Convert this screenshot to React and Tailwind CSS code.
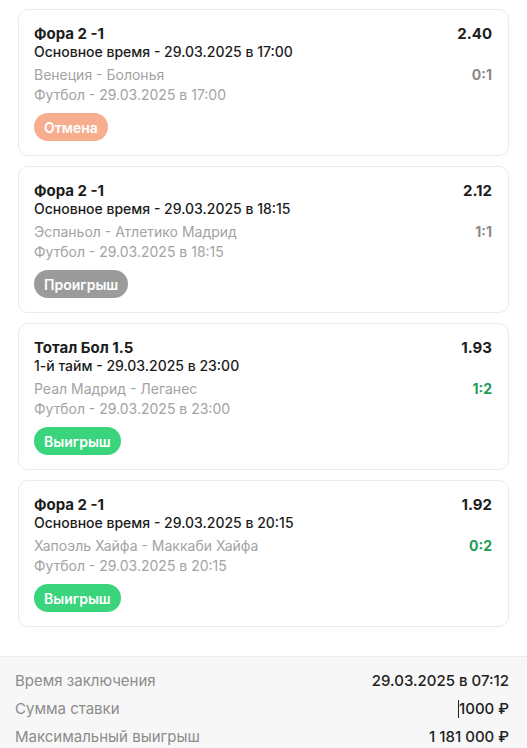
import React from "react";

const bets = [
  {
    title: "Фора 2 -1",
    odd: "2.40",
    period: "Основное время - 29.03.2025 в 17:00",
    match: "Венеция - Болонья",
    score: "0:1",
    scoreClass: "text-[#8a8a8a]",
    sport: "Футбол - 29.03.2025 в 17:00",
    status: "Отмена",
    statusClass: "bg-[#f7ae8f]",
  },
  {
    title: "Фора 2 -1",
    odd: "2.12",
    period: "Основное время - 29.03.2025 в 18:15",
    match: "Эспаньол - Атлетико Мадрид",
    score: "1:1",
    scoreClass: "text-[#8a8a8a]",
    sport: "Футбол - 29.03.2025 в 18:15",
    status: "Проигрыш",
    statusClass: "bg-[#9b9b9b]",
  },
  {
    title: "Тотал Бол 1.5",
    odd: "1.93",
    period: "1-й тайм - 29.03.2025 в 23:00",
    match: "Реал Мадрид - Леганес",
    score: "1:2",
    scoreClass: "text-[#1f9d55]",
    sport: "Футбол - 29.03.2025 в 23:00",
    status: "Выигрыш",
    statusClass: "bg-[#39d47c]",
  },
  {
    title: "Фора 2 -1",
    odd: "1.92",
    period: "Основное время - 29.03.2025 в 20:15",
    match: "Хапоэль Хайфа - Маккаби Хайфа",
    score: "0:2",
    scoreClass: "text-[#1f9d55]",
    sport: "Футбол - 29.03.2025 в 20:15",
    status: "Выигрыш",
    statusClass: "bg-[#39d47c]",
  },
];

function Card({ b }) {
  return (
    <div className="rounded-[10px] border border-[#ebebeb] bg-white pl-[15px] pr-[16px] pt-[14px] pb-[14px]">
      <div className="flex items-start justify-between">
        <div>
          <div className="text-[15px] leading-[20px] font-bold text-[#1c1c1c]">{b.title}</div>
          <div className="text-[14px] leading-[16px] font-medium text-[#1c1c1c]">{b.period}</div>
        </div>
        <div className="text-[15px] leading-[20px] font-bold text-[#1c1c1c]">{b.odd}</div>
      </div>
      <div className="mt-[5px] flex items-start justify-between">
        <div>
          <div className="text-[14px] leading-[20px] text-[#a3a3a3]">{b.match}</div>
          <div className="text-[14px] leading-[20px] text-[#a3a3a3]">{b.sport}</div>
        </div>
        <div className={"text-[14px] leading-[20px] font-bold " + b.scoreClass}>{b.score}</div>
      </div>
      <div className="mt-[8px] flex">
        <span className={"inline-flex h-[28px] items-center rounded-full px-[10px] text-[14px] font-semibold text-white " + b.statusClass}>
          {b.status}
        </span>
      </div>
    </div>
  );
}

export default function App() {
  return (
    <div className="min-h-[748px] w-[527px] bg-white" style={{ fontFamily: "Inter, 'Noto Sans', sans-serif" }}>
      <div className="flex flex-col gap-[10px] px-[18px] pt-[9px]">
        {bets.map((b, i) => (
          <Card key={i} b={b} />
        ))}
      </div>
      <div className="mt-[29px] border-t border-[#ececec] bg-[#f7f7f7] pl-[15px] pr-[18px] pt-[10px] pb-[2px]">
        <div className="flex h-[28px] items-center justify-between text-[15px]">
          <span className="text-[#8c8c8c]">Время заключения</span>
          <span className="font-medium text-[#222]">29.03.2025 в 07:12</span>
        </div>
        <div className="flex h-[28px] items-center justify-between text-[15px]">
          <span className="text-[#8c8c8c]">Сумма ставки</span>
          <span className="flex items-center font-medium text-[#222]">
            <span className="inline-block h-[18px] w-[1px] bg-[#222]"></span>1000 ₽
          </span>
        </div>
        <div className="flex h-[28px] items-center justify-between text-[15px]">
          <span className="text-[#8c8c8c]">Максимальный выигрыш</span>
          <span className="font-medium text-[#222]">1 181 000 ₽</span>
        </div>
      </div>
    </div>
  );
}
